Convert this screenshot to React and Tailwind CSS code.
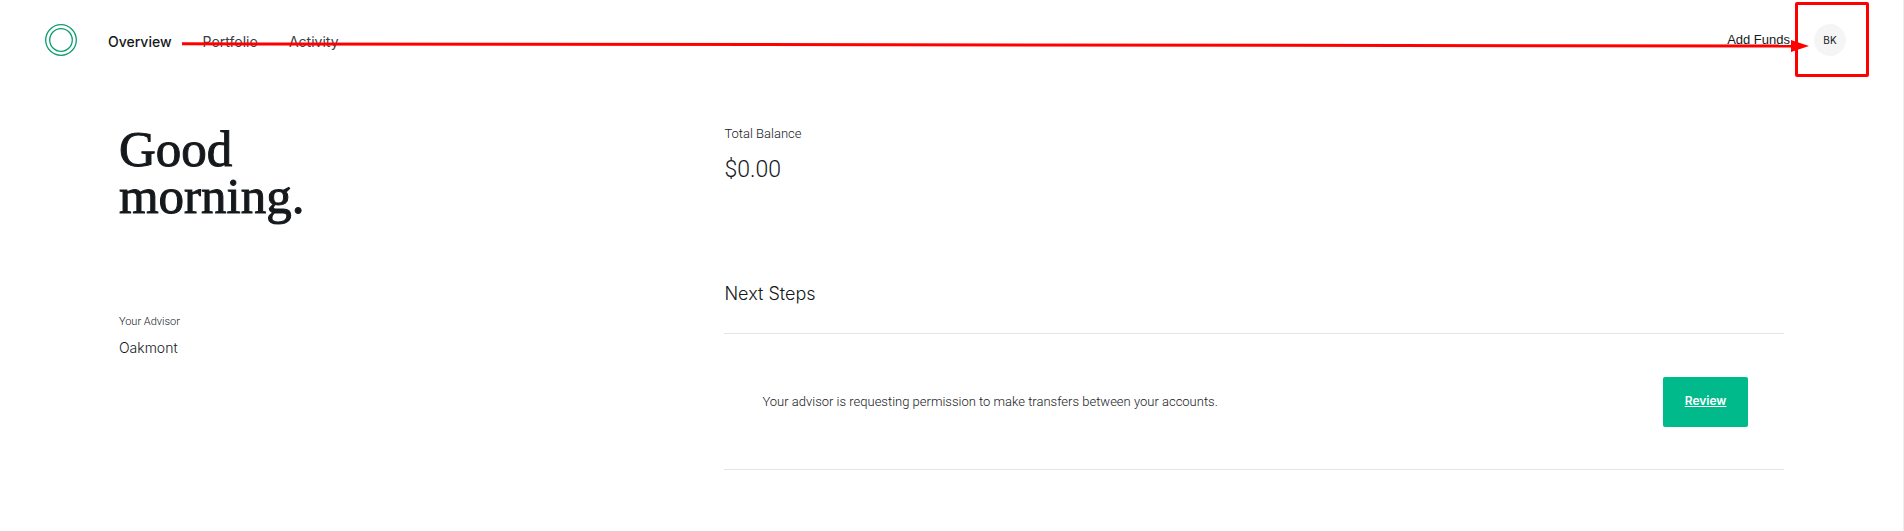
import React from 'react';

const navItems = [
  { href: '#overview', label: 'Overview', active: true },
  { href: '#portfolio', label: 'Portfolio', active: false },
  { href: '#activity', label: 'Activity', active: false },
];

const Logo = () => (
  <svg className="w-8 h-8" viewBox="0 0 32 32" fill="none" stroke="#0c9d70" strokeWidth="1.3" aria-hidden="true">
    <circle cx="16" cy="16" r="15.3" />
    <circle cx="16" cy="16" r="11.3" />
  </svg>
);

const Header = () => (
  <header className="h-20 pl-[45px] pr-[57px] flex items-center justify-between">
    <div className="flex items-center gap-[31px]">
      <a href="#home" aria-label="Home">
        <Logo />
      </a>
      <nav className="flex items-center gap-[31px] pt-1 text-sm font-['Inter',sans-serif]">
        {navItems.map(({ href, label, active }) => (
          <a
            key={href}
            href={href}
            className={active ? 'font-medium text-[#15191c]' : 'text-[#3b4045]'}
          >
            {label}
          </a>
        ))}
      </nav>
    </div>
    <div className="flex items-center gap-6">
      <a href="#add-funds" className="text-[13px] text-[#15191c] font-['Liberation_Sans',sans-serif]">Add Funds</a>
      <button
        type="button"
        className="w-8 h-8 rounded-full bg-[#f5f5f5] text-[10px] font-['Inter',sans-serif] text-[#15191c]"
      >
        BK
      </button>
    </div>
  </header>
);

// Red callout pointing from the nav to the account menu
const Callout = () => (
  <div className="absolute inset-x-0 top-0 h-20 pointer-events-none" aria-hidden="true">
    <svg
      className="absolute left-[182px] top-10 h-3 w-[calc(100%-290px)]"
      viewBox="0 0 100 12"
      preserveAspectRatio="none"
    >
      <line x1="0" y1="3.8" x2="100" y2="6" stroke="#ff0000" strokeWidth="3" vectorEffect="non-scaling-stroke" />
    </svg>
    <svg className="absolute right-[94px] top-10 w-[18px] h-3" viewBox="0 0 18 12">
      <path d="M0 0L18 6L0 12Z" fill="#ff0000" />
    </svg>
    <div className="absolute right-[34px] top-[2px] w-[74px] h-[75px] border-3 border-[#ff0000] rounded-xs" />
  </div>
);

const App = () => {
  return (
    <div className="relative min-h-screen bg-white border-r border-[#ededed] font-['Roboto',sans-serif] text-[#15191c]">
      <Header />
      <main className="px-[6.25%] pt-11 grid grid-cols-[4fr_7fr]">
        <section>
          <h1 className="pt-[2px] font-['Liberation_Serif',serif] text-[51px] leading-[47px] text-[#15191c] [-webkit-text-stroke:1px_#15191c]">
            Good<br />morning.
          </h1>
          <p className="mt-[94px] text-[11px] leading-4 font-light">Your Advisor</p>
          <p className="mt-2 text-sm leading-5 font-light font-['Inter',sans-serif]">Oakmont</p>
        </section>
        <section>
          <p className="text-[13px] leading-5 font-light">Total Balance</p>
          <p className="mt-2.5 text-[23px] leading-8 font-light">$0.00</p>
          <h2 className="mt-24 text-lg leading-6 font-light font-['Inter',sans-serif]">Next Steps</h2>
          <div className="mt-[27px] pt-[43px] pb-[42px] pl-[38px] pr-9 border-y border-[#e5e5e5] flex items-center justify-between">
            <p className="text-[13px] leading-5 font-light">
              Your advisor is requesting permission to make transfers between your accounts.
            </p>
            <button
              type="button"
              className="h-[50px] w-[85px] pb-0.5 rounded-xs bg-[#00ba8b] text-xs font-semibold font-['Inter',sans-serif] text-white underline"
            >
              Review
            </button>
          </div>
        </section>
      </main>
      <Callout />
    </div>
  );
};

export default App;
